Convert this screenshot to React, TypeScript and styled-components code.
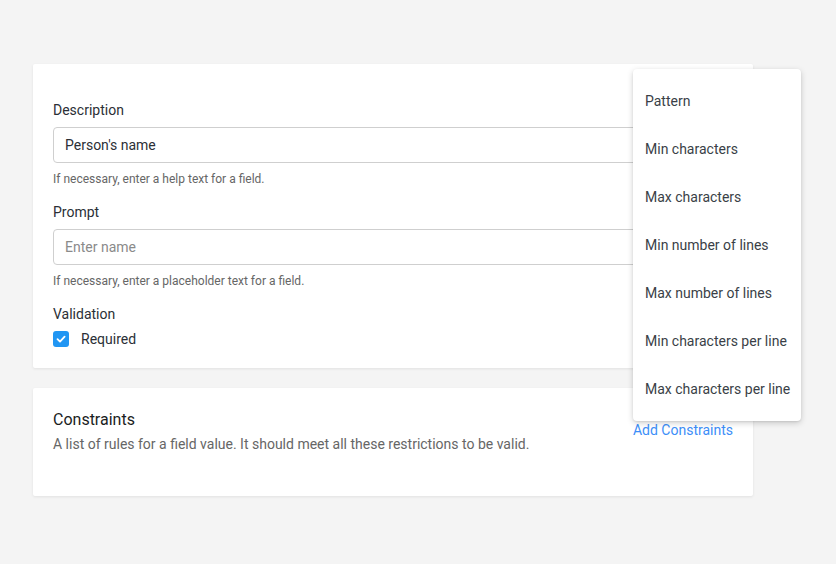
import React from 'react';
import styled, { createGlobalStyle } from 'styled-components';

const GlobalStyle = createGlobalStyle`
	html, body {
		margin: 0;
		padding: 0;
		background: #f4f4f4;
		font-family: Roboto, 'Liberation Sans', sans-serif;
	}
`;

const Page = styled.div`
	position: relative;
	width: 836px;
	height: 564px;
	padding: 64px 0 0 33px;
	box-sizing: border-box;
	display: flex;
	flex-direction: column;
	gap: 20px;
`;

const Card = styled.section`
	width: 720px;
	background: #fff;
	border-radius: 2px;
	box-shadow: 0 1px 3px rgba(0, 0, 0, 0.08);
	box-sizing: border-box;
`;

const FieldsCard = styled(Card)`
	height: 304px;
	padding: 36px 20px 0 20px;
`;

const Label = styled.div`
	font-size: 14px;
	line-height: 20px;
	color: #2b2f36;
	margin-bottom: 7px;
`;

const Input = styled.input`
	display: block;
	width: 680px;
	height: 36px;
	box-sizing: border-box;
	border: 1px solid #cfcfcf;
	border-radius: 4px;
	padding: 0 11px;
	font: 14px Roboto, 'Liberation Sans', sans-serif;
	color: #2b2f36;
	outline: none;

	&::placeholder {
		color: #8a8a8a;
	}
`;

const Help = styled.div`
	font-size: 12px;
	line-height: 16px;
	color: #666;
	margin: 8px 0 15px;
`;

const CheckRow = styled.label`
	display: flex;
	align-items: center;
	gap: 12px;
	font-size: 14px;
	color: #2b2f36;
	margin-top: 3px;
`;

const Box = styled.span`
	width: 16px;
	height: 16px;
	border-radius: 3px;
	background: #2196f3;
	display: flex;
	align-items: center;
	justify-content: center;
`;

const ConstraintsCard = styled(Card)`
	height: 108px;
	padding: 22px 20px 0 20px;
	display: flex;
	justify-content: space-between;
	align-items: flex-start;
`;

const Title = styled.div`
	font-size: 16px;
	font-weight: 400;
	line-height: 20px;
	color: #1a1d22;
	margin-bottom: 5px;
`;

const Desc = styled.div`
	font-size: 14px;
	line-height: 18px;
	color: #666;
`;

const LinkButton = styled.button`
	background: none;
	border: none;
	padding: 0;
	margin-top: 12px;
	font: 14px Roboto, 'Liberation Sans', sans-serif;
	color: #3d8ef8;
	cursor: pointer;
`;

const Menu = styled.ul`
	position: absolute;
	left: 633px;
	top: 69px;
	width: 168px;
	margin: 0;
	padding: 8px 0;
	list-style: none;
	background: #fff;
	border-radius: 4px;
	box-shadow: 0 2px 6px rgba(0, 0, 0, 0.18), 0 1px 2px rgba(0, 0, 0, 0.08);
`;

const MenuItem = styled.li`
	height: 48px;
	display: flex;
	align-items: center;
	padding: 0 12px;
	font-size: 14px;
	color: #3a3f47;
	white-space: nowrap;
`;

const items = [
	'Pattern',
	'Min characters',
	'Max characters',
	'Min number of lines',
	'Max number of lines',
	'Min characters per line',
	'Max characters per line',
];

export default function App() {
	return (
		<>
			<GlobalStyle />
			<Page>
				<FieldsCard>
					<Label>Description</Label>
					<Input defaultValue="Person's name" />
					<Help>If necessary, enter a help text for a field.</Help>
					<Label>Prompt</Label>
					<Input placeholder="Enter name" />
					<Help>If necessary, enter a placeholder text for a field.</Help>
					<Label>Validation</Label>
					<CheckRow>
						<Box>
							<svg width="12" height="12" viewBox="0 0 12 12">
								<path d="M2.5 6.2 L5 8.6 L9.6 3.6" fill="none" stroke="#fff" strokeWidth="1.8" strokeLinecap="round" strokeLinejoin="round" />
							</svg>
						</Box>
						Required
					</CheckRow>
				</FieldsCard>
				<ConstraintsCard>
					<div>
						<Title>Constraints</Title>
						<Desc>A list of rules for a field value. It should meet all these restrictions to be valid.</Desc>
					</div>
					<LinkButton>Add Constraints</LinkButton>
				</ConstraintsCard>
				<Menu>
					{items.map((item) => (
						<MenuItem key={item}>{item}</MenuItem>
					))}
				</Menu>
			</Page>
		</>
	);
}
